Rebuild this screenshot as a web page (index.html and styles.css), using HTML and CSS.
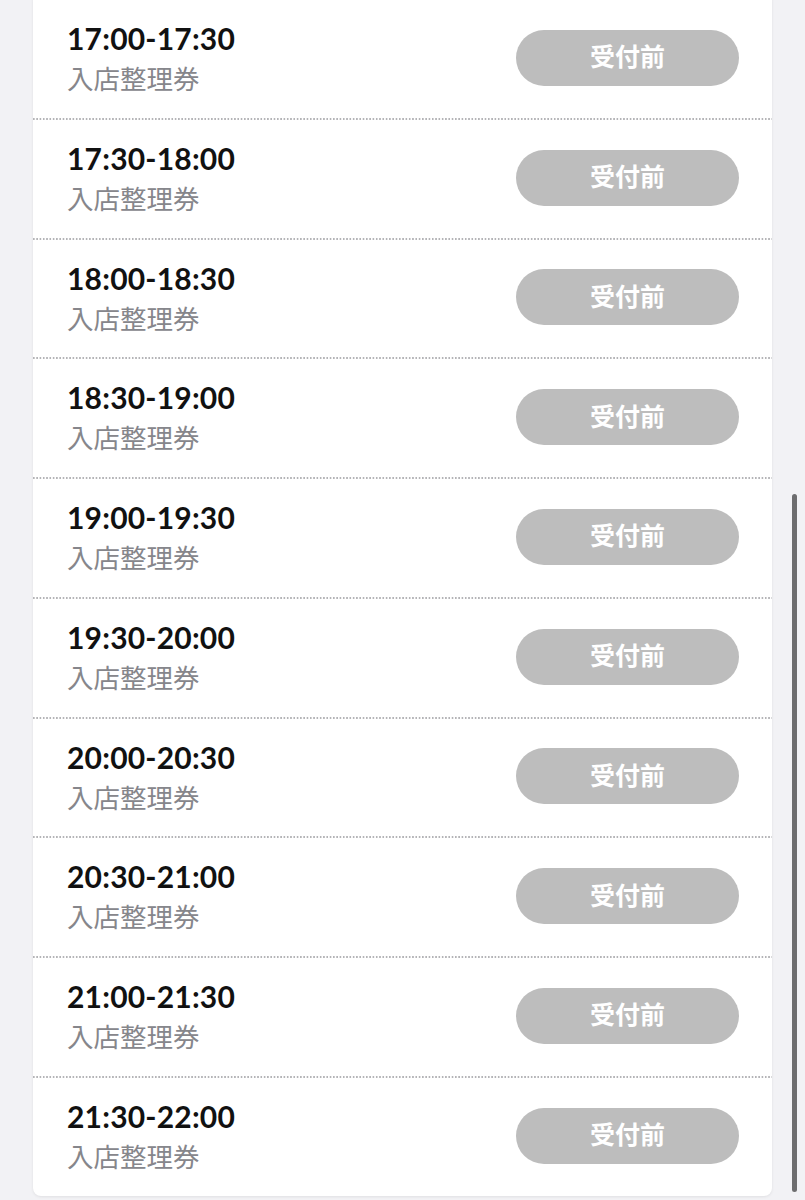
FILE: index.html
```html
<!DOCTYPE html>
<html lang="ja">
<head>
    <meta charset="UTF-8">
    <meta name="viewport" content="width=device-width, initial-scale=1.0">
    <title>入店整理券</title>
    <link rel="stylesheet" href="styles.css">
</head>
<body>
    <div class="ticket-list">
        <div class="slot">
            <div class="slot-info">
                <div class="slot-time">17:00-17:30</div>
                <div class="slot-label">入店整理券</div>
            </div>
            <button class="slot-button" disabled>受付前</button>
        </div>
        <div class="slot">
            <div class="slot-info">
                <div class="slot-time">17:30-18:00</div>
                <div class="slot-label">入店整理券</div>
            </div>
            <button class="slot-button" disabled>受付前</button>
        </div>
        <div class="slot">
            <div class="slot-info">
                <div class="slot-time">18:00-18:30</div>
                <div class="slot-label">入店整理券</div>
            </div>
            <button class="slot-button" disabled>受付前</button>
        </div>
        <div class="slot">
            <div class="slot-info">
                <div class="slot-time">18:30-19:00</div>
                <div class="slot-label">入店整理券</div>
            </div>
            <button class="slot-button" disabled>受付前</button>
        </div>
        <div class="slot">
            <div class="slot-info">
                <div class="slot-time">19:00-19:30</div>
                <div class="slot-label">入店整理券</div>
            </div>
            <button class="slot-button" disabled>受付前</button>
        </div>
        <div class="slot">
            <div class="slot-info">
                <div class="slot-time">19:30-20:00</div>
                <div class="slot-label">入店整理券</div>
            </div>
            <button class="slot-button" disabled>受付前</button>
        </div>
        <div class="slot">
            <div class="slot-info">
                <div class="slot-time">20:00-20:30</div>
                <div class="slot-label">入店整理券</div>
            </div>
            <button class="slot-button" disabled>受付前</button>
        </div>
        <div class="slot">
            <div class="slot-info">
                <div class="slot-time">20:30-21:00</div>
                <div class="slot-label">入店整理券</div>
            </div>
            <button class="slot-button" disabled>受付前</button>
        </div>
        <div class="slot">
            <div class="slot-info">
                <div class="slot-time">21:00-21:30</div>
                <div class="slot-label">入店整理券</div>
            </div>
            <button class="slot-button" disabled>受付前</button>
        </div>
        <div class="slot">
            <div class="slot-info">
                <div class="slot-time">21:30-22:00</div>
                <div class="slot-label">入店整理券</div>
            </div>
            <button class="slot-button" disabled>受付前</button>
        </div>
    </div>

    <div class="scroll-thumb"></div>
</body>
</html>
```

FILE: styles.css
```css
* {
    margin: 0;
    padding: 0;
    box-sizing: border-box;
}

body {
    background-color: #f2f2f5;
    font-family: Lato, "Noto Sans CJK JP", sans-serif;
    padding: 0 33px 20px;
}

.ticket-list {
    margin-top: -2px;
    background-color: #fff;
    border-radius: 0 0 8px 8px;
    box-shadow: 0 1px 3px rgba(0, 0, 0, 0.08);
}

.slot {
    display: flex;
    align-items: center;
    justify-content: space-between;
    height: 119.75px;
    padding: 0 33px 0 34px;
}

/* dotted divider between rows */
.slot + .slot {
    background-image: linear-gradient(to right, #b4b4b7 55%, transparent 55%);
    background-size: 3.3px 1.5px;
    background-repeat: repeat-x;
    background-position: left top;
}

.slot-time {
    font-family: Lato, sans-serif;
    font-weight: 700;
    font-size: 30px;
    letter-spacing: 0.2px;
    line-height: 1.2;
    color: #111;
}

.slot-label {
    margin-top: 5px;
    font-family: "Noto Sans CJK JP", sans-serif;
    font-size: 26.5px;
    line-height: 1.3;
    color: #86868b;
}

.slot-button {
    width: 223px;
    height: 56px;
    padding-bottom: 5px;
    border: none;
    border-radius: 28px;
    background-color: #bdbdbd;
    color: #fff;
    font-family: "Noto Sans CJK JP", sans-serif;
    font-weight: 700;
    font-size: 25px;
}

.scroll-thumb {
    position: fixed;
    right: 8px;
    top: 494px;
    width: 5px;
    height: 698px;
    border-radius: 3px;
    background-color: rgba(0, 0, 0, 0.55);
}
```
